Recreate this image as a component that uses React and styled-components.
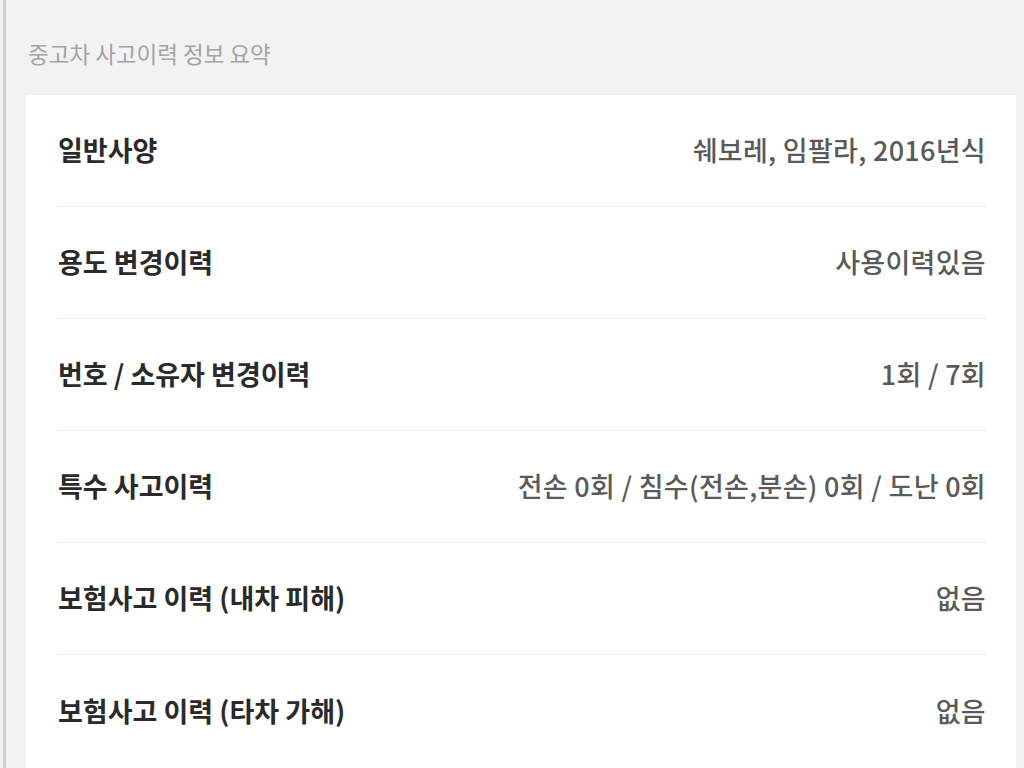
import styled, { createGlobalStyle } from "styled-components";

const GlobalStyle = createGlobalStyle`
  body {
    margin: 0;
    background: #f2f2f2;
    font-family: "Noto Sans CJK KR", "Noto Sans", sans-serif;
  }
`;

const rows = [
  { label: "일반사양", value: "쉐보레, 임팔라, 2016년식" },
  { label: "용도 변경이력", value: "사용이력있음" },
  { label: "번호 / 소유자 변경이력", value: "1회 / 7회" },
  { label: "특수 사고이력", value: "전손 0회 / 침수(전손,분손) 0회 / 도난 0회" },
  { label: "보험사고 이력 (내차 피해)", value: "없음" },
  { label: "보험사고 이력 (타차 가해)", value: "없음" },
];

export default function App() {
  return (
    <>
      <GlobalStyle />
      <Page>
        <Section>
          <Title>중고차 사고이력 정보 요약</Title>
          <Card>
            {rows.map((r, i) => (
              <Row key={i} last={i === rows.length - 1}>
                <Label>{r.label}</Label>
                <Value>{r.value}</Value>
              </Row>
            ))}
          </Card>
        </Section>
      </Page>
    </>
  );
}

const Page = styled.div`
  height: 768px;
  overflow: hidden;
  margin-left: 3px;
  border-left: 3px solid #cfcfcf;
`;

const Section = styled.section`
  padding: 37px 8px 0 20px;
`;

const Title = styled.h2`
  margin: 0 0 26px 2px;
  font-size: 22.5px;
  line-height: 32px;
  font-weight: 400;
  color: #a3a3a3;
`;

const Card = styled.div`
  background: #fff;
  padding: 0 30px 0 32px;
  min-height: 700px;
`;

const Row = styled.div`
  height: 112px;
  display: flex;
  align-items: center;
  justify-content: space-between;
  padding-bottom: 2px;
  box-sizing: border-box;
  border-bottom: ${p => (p.last ? "none" : "1px solid #ececec")};
`;

const Label = styled.span`
  font-size: 27px;
  font-weight: 600;
  color: #2a2a2a;
`;

const Value = styled.span`
  font-size: 27px;
  font-weight: 500;
  color: #5a5a5a;
  letter-spacing: 0.3px;
`;
